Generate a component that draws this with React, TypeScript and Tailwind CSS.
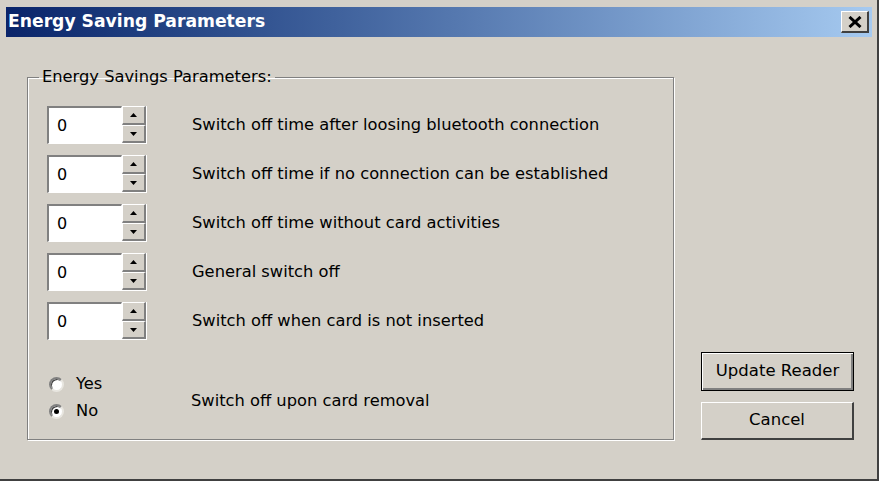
import React, { useState } from 'react';

const font = { fontFamily: '"DejaVu Sans", Tahoma, sans-serif' };

const rows = [
  'Switch off time after loosing bluetooth connection',
  'Switch off time if no connection can be established',
  'Switch off time without card activities',
  'General switch off',
  'Switch off when card is not inserted',
];

function Spinner({ value }: { value: string }) {
  return (
    <div className="flex h-[38px]">
      <div className="flex w-[75px] items-center border-t-2 border-l-2 border-b border-r border-t-[#808080] border-l-[#808080] border-b-white border-r-white bg-white pl-2 text-[16px] text-black">
        {value}
      </div>
      <div className="flex w-[25px] flex-col border-b border-r border-b-white border-r-white">
        <div className="flex flex-1 items-center justify-center border-t border-l border-b-2 border-r-2 border-t-white border-l-white border-b-[#808080] border-r-[#808080] bg-[#d4d0c8]">
          <svg width="7" height="4" viewBox="0 0 7 4"><path d="M3.5 0 L7 4 L0 4 Z" fill="#000" /></svg>
        </div>
        <div className="flex flex-1 items-center justify-center border-t border-l border-b-2 border-r-2 border-t-white border-l-white border-b-[#808080] border-r-[#808080] bg-[#d4d0c8]">
          <svg width="7" height="4" viewBox="0 0 7 4"><path d="M0 0 L7 0 L3.5 4 Z" fill="#000" /></svg>
        </div>
      </div>
    </div>
  );
}

function Radio({ checked, label, onClick }: { checked: boolean; label: string; onClick: () => void }) {
  return (
    <button onClick={onClick} className="flex h-[22px] items-center gap-[12px] text-[16.3px] text-black">
      <span className="flex h-[15px] w-[15px] shrink-0 items-center justify-center rounded-full border-2 border-t-[#808080] border-l-[#808080] border-b-[#e8e6e0] border-r-[#e8e6e0] bg-white shadow-[inset_1px_1px_0_#404040]">
        {checked && <span className="h-[5px] w-[5px] rounded-full bg-black" />}
      </span>
      {label}
    </button>
  );
}

export default function App() {
  const [removal, setRemoval] = useState<'yes' | 'no'>('no');

  return (
    <div className="h-[488px] w-[884px] bg-white" style={font}>
      <div className="flex h-[481px] w-[879px] flex-col border-r-2 border-b-2 border-r-[#404040] border-b-[#404040] bg-[#d4d0c8] pt-[7px] pl-[6px] pr-[5px]">
        {/* Title bar */}
        <div className="flex h-[30px] items-center justify-between bg-gradient-to-r from-[#0a246a] to-[#a6caf0] pl-[2px] pr-[3px]">
          <span className="text-[17.2px] font-bold text-white">Energy Saving Parameters</span>
          <button className="flex h-[22px] w-[28px] items-center justify-center border-t border-l border-b-2 border-r-2 border-t-white border-l-white border-b-[#404040] border-r-[#404040] bg-[#d4d0c8]">
            <svg width="14" height="12" viewBox="0 0 14 12">
              <path d="M1.5 1 L12.5 11 M12.5 1 L1.5 11" stroke="#000" strokeWidth="3" />
            </svg>
          </button>
        </div>

        <div className="mt-[28px] flex items-end">
          {/* Group box */}
          <fieldset className="ml-[21px] h-[375px] w-[647px] border border-[#808080] px-[19px] pt-[17px] shadow-[1px_1px_0_#fff,inset_1px_1px_0_#fff]">
            <legend className="ml-[-8px] px-[3px] text-[16.3px] text-black">Energy Savings Parameters:</legend>
            <div className="flex flex-col gap-[11px]">
              {rows.map(r => (
                <div key={r} className="flex items-center gap-[45px]">
                  <Spinner value="0" />
                  <span className="text-[16.3px] text-black">{r}</span>
                </div>
              ))}
            </div>
            <div className="mt-[33px] flex items-center">
              <div className="flex w-[144px] flex-col items-start gap-[5px] pl-[2px]">
                <Radio checked={removal === 'yes'} label="Yes" onClick={() => setRemoval('yes')} />
                <Radio checked={removal === 'no'} label="No" onClick={() => setRemoval('no')} />
              </div>
              <span className="mt-[6px] text-[16.3px] text-black">Switch off upon card removal</span>
            </div>
          </fieldset>

          {/* Buttons */}
          <div className="ml-[27px] flex flex-col gap-[11px]">
            <button className="h-[39px] w-[153px] border border-black bg-[#d4d0c8] text-[16.5px] text-black shadow-[inset_1px_1px_0_#fff,inset_-2px_-2px_0_#808080]">
              Update Reader
            </button>
            <button className="h-[38px] w-[153px] border-t border-l border-b-2 border-r-2 border-t-white border-l-white border-b-[#404040] border-r-[#404040] bg-[#d4d0c8] text-[16.5px] text-black">
              Cancel
            </button>
          </div>
        </div>
      </div>
    </div>
  );
}
